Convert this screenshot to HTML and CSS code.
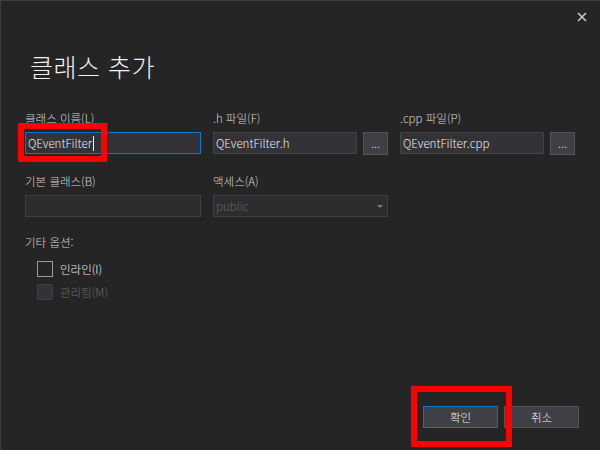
FILE: index.html
```html
<!DOCTYPE html>
<html lang="ko">
<head>
  <meta charset="UTF-8">
  <title>클래스 추가</title>
  <link rel="stylesheet" href="styles.css">
</head>
<body>
  <div class="dialog">
    <div class="topbar">
      <span class="close">
        <svg width="10" height="10" viewBox="0 0 10 10"><path d="M1 1L9 9M9 1L1 9" stroke="#c8c8c8" stroke-width="1.6"/></svg>
      </span>
    </div>

    <h1 class="title">클래스 추가</h1>

    <div class="grid">
      <div class="field">
        <label>클래스 이름(L)</label>
        <div class="input focus"><span>QEventFilter</span><span class="caret"></span></div>
      </div>
      <div class="field">
        <label>.h 파일(F)</label>
        <div class="row"><div class="input">QEventFilter.h</div><div class="browse">...</div></div>
      </div>
      <div class="field">
        <label>.cpp 파일(P)</label>
        <div class="row"><div class="input">QEventFilter.cpp</div><div class="browse">...</div></div>
      </div>
      <div class="field">
        <label>기본 클래스(B)</label>
        <div class="input disabled"></div>
      </div>
      <div class="field">
        <label>액세스(A)</label>
        <div class="input disabled combo"><span>public</span><span class="arrow"></span></div>
      </div>
    </div>

    <div class="options">
      <div class="opt-title">기타 옵션:</div>
      <div class="check"><span class="box"></span>인라인(I)</div>
      <div class="check off"><span class="box"></span>관리됨(M)</div>
    </div>

    <div class="footer">
      <div class="btn primary">확인</div>
      <div class="btn">취소</div>
    </div>

    <div class="mark mark-name"></div>
    <div class="mark mark-ok"></div>
  </div>
</body>
</html>
```

FILE: styles.css
```css
* { box-sizing: border-box; }
body { margin: 0; background: #252526; font-family: "Noto Sans CJK KR", "Noto Sans", sans-serif; font-weight: 300; color: #dcdcdc; }
.dialog { position: relative; width: 600px; height: 450px; background: #252526; border-top: 1px solid #3c3c3f; border-left: 1px solid #3c3c3f; display: flex; flex-direction: column; padding: 0 21px 22px 24px; }
.topbar { height: 12px; display: flex; justify-content: flex-end; }
.close { margin-top: 11px; margin-right: -8px; width: 10px; height: 10px; display: flex; }
.title { margin: 38px 0 0 5px; font-size: 25px; font-weight: 300; line-height: 30px; color: #f1f1f1; letter-spacing: 0.5px; }

.grid { margin-top: 29px; display: grid; grid-template-columns: 176px 175px 175px; column-gap: 12px; row-gap: 18px; }
.field label { display: block; font-size: 11.5px; line-height: 16px; margin-bottom: 6px; color: #d4d4d4; }
.row { display: flex; gap: 6px; }
.row .input { flex: 1; }
.input { height: 22px; background: #333337; border: 1px solid #434346; color: #f1f1f1; font-size: 11.5px; line-height: 20px; padding: 0 2px; white-space: nowrap; overflow: hidden; display: flex; align-items: center; }
.input.focus { border-color: #007acc; }
.caret { width: 1px; height: 15px; background: #f1f1f1; margin-left: 1px; }
.input.disabled { background: #2d2d30; border-color: #3f3f46; color: #656565; }
.combo { justify-content: space-between; padding-right: 4px; }
.arrow { width: 0; height: 0; border-left: 3px solid transparent; border-right: 3px solid transparent; border-top: 3px solid #7a7a7a; margin-top: 1px; }
.browse { width: 25px; height: 23px; background: #3f3f46; border: 1px solid #555558; color: #f1f1f1; font-size: 12px; line-height: 20px; text-align: center; }

.options { margin-top: 17px; }
.opt-title { font-size: 11.5px; line-height: 16px; color: #d4d4d4; }
.check { display: flex; align-items: center; gap: 7px; margin-left: 12px; font-size: 11.5px; line-height: 16px; color: #f1f1f1; margin-top: 11px; }
.check + .check { margin-top: 7px; }
.box { width: 16px; height: 16px; border: 1px solid #999999; background: #252526; }
.check.off { color: #6d6d6d; }
.check.off .box { background: #333337; border-color: #3f3f46; }

.footer { margin-top: auto; display: flex; justify-content: flex-end; gap: 6px; }
.btn { width: 75px; height: 22px; background: #3f3f46; border: 1px solid #555558; color: #f1f1f1; font-size: 11.5px; line-height: 20px; text-align: center; }
.btn.primary { border-color: #007acc; }

.mark { position: absolute; border: 6px solid #ff0000; }
.mark-name { left: 17px; top: 122px; width: 89px; height: 39px; }
.mark-ok { left: 410px; top: 385px; width: 101px; height: 61px; }
```
